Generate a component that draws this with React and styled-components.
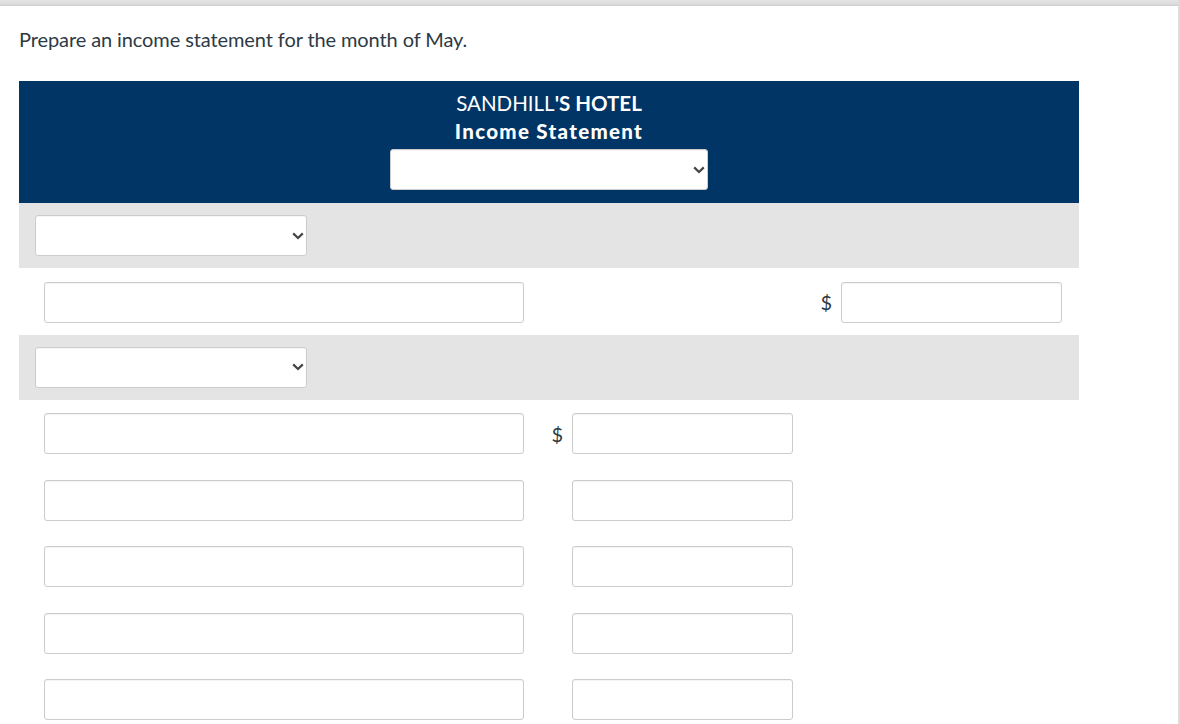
import React from "react";
import styled, { createGlobalStyle } from "styled-components";

const Global = createGlobalStyle`
  html, body { margin: 0; padding: 0; background: #fff; }
  body { font-family: Lato, "Open Sans", Arial, sans-serif; color: #2d3a45; }
  * { box-sizing: border-box; }
`;

const Page = styled.div`
  width: 1180px;
  min-height: 724px;
  border-right: 2px solid #dcdcdc;
  overflow: hidden;
`;

const TopBar = styled.div`
  height: 6px;
  background: linear-gradient(#e4e4e4, #d9d9d9);
  border-bottom: 1px solid #cfcfcf;
`;

const Content = styled.div`
  padding: 0 0 0 19px;
`;

const Prompt = styled.p`
  margin: 0;
  padding-top: 18px;
  font-size: 20px;
  line-height: 30px;
  color: #2d3a45;
  letter-spacing: -0.1px;
`;

const Statement = styled.div`
  width: 1060px;
  margin-top: 27px;
`;

const Header = styled.div`
  background: #003566;
  padding: 8px 0 13px;
  display: flex;
  flex-direction: column;
  align-items: center;
  color: #fff;
`;

const TitleLine = styled.div`
  font-size: 20.5px;
  line-height: 28px;
  font-weight: ${(p) => (p.$heavy ? 900 : 700)};
  letter-spacing: ${(p) => (p.$heavy ? "1.3px" : "0")};
  text-align: center;
`;

const Light = styled.span`
  font-weight: 400;
`;

const SelectWrap = styled.div`
  position: relative;
  width: ${(p) => p.$w}px;
  height: 41px;
  margin-top: ${(p) => p.$mt || 0}px;
`;

const Select = styled.select`
  appearance: none;
  width: 100%;
  height: 100%;
  border: 1px solid #cccccc;
  border-radius: 3px;
  background: #fff;
  box-shadow: inset 0 1px 1px rgba(0, 0, 0, 0.04);
  font-family: inherit;
  font-size: 16px;
  outline: none;
`;

const Chevron = styled.svg`
  position: absolute;
  right: 3px;
  top: 50%;
  margin-top: -4px;
  width: 12px;
  height: 8px;
  pointer-events: none;
`;

const DropDown = ({ w, mt }) => (
  <SelectWrap $w={w} $mt={mt}>
    <Select defaultValue="">
      <option value=""></option>
    </Select>
    <Chevron viewBox="0 0 12 8">
      <path d="M1.2 1.4 L6 6 L10.8 1.4" fill="none" stroke="#444" strokeWidth="2.2" />
    </Chevron>
  </SelectWrap>
);

const SectionRow = styled.div`
  background: #e4e4e4;
  height: 65px;
  padding: 12px 0 0 16px;
`;

const LineRow = styled.div`
  height: 66.5px;
  padding: ${(p) => (p.$first ? "13px" : "13.5px")} 0 0 25px;
  display: grid;
  grid-template-columns: 480px 48px 221px 48px 221px;
  align-items: start;
`;

const Field = styled.input`
  width: 100%;
  height: 41px;
  border: 1px solid #cccccc;
  border-radius: 3px;
  background: #fff;
  box-shadow: inset 0 1px 1px rgba(0, 0, 0, 0.05);
  font-family: inherit;
  font-size: 16px;
  outline: none;
`;

const Dollar = styled.div`
  height: 41px;
  display: flex;
  align-items: center;
  justify-content: flex-end;
  padding-right: 9px;
  font-size: 20px;
  color: #2d3a45;
`;

const Empty = styled.div``;

const Line = ({ col, dollar }) => (
  <LineRow>
    <Field type="text" />
    {col === 1 ? (
      <>
        <Dollar>{dollar ? "$" : ""}</Dollar>
        <Field type="text" />
        <Empty />
        <Empty />
      </>
    ) : (
      <>
        <Empty />
        <Empty />
        <Dollar>{dollar ? "$" : ""}</Dollar>
        <Field type="text" />
      </>
    )}
  </LineRow>
);

export default function App() {
  return (
    <>
      <Global />
      <Page>
        <TopBar />
        <Content>
          <Prompt>Prepare an income statement for the month of May.</Prompt>
          <Statement>
            <Header>
              <TitleLine>
                <Light>SANDHILL</Light>'S HOTEL
              </TitleLine>
              <TitleLine $heavy>Income Statement</TitleLine>
              <DropDown w={318} mt={4} />
            </Header>
            <SectionRow>
              <DropDown w={272} />
            </SectionRow>
            <Line col={2} dollar />
            <SectionRow>
              <DropDown w={272} />
            </SectionRow>
            <Line col={1} dollar />
            <Line col={1} />
            <Line col={1} />
            <Line col={1} />
            <Line col={1} />
          </Statement>
        </Content>
      </Page>
    </>
  );
}
